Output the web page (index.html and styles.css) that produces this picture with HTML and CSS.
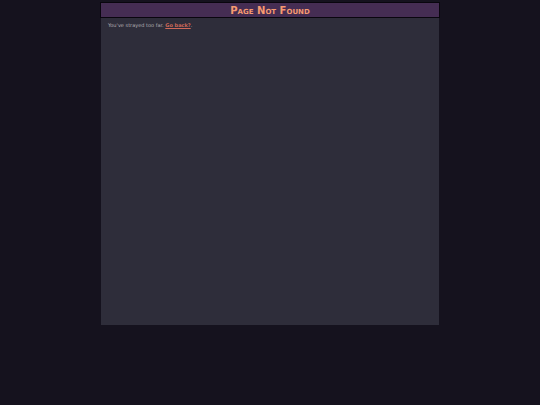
FILE: index.html
```html
<!DOCTYPE html>
<html lang="en">
<head>
<meta charset="utf-8">
<title>Page Not Found</title>
<link rel="stylesheet" href="styles.css">
</head>
<body>
<div class="page">
  <header class="banner"><h1 class="title">Page Not Found</h1></header>
  <main class="content">
    <p class="message">You've strayed too far. <a class="link" href="/">Go back?</a>.</p>
  </main>
</div>
</body>
</html>
```

FILE: styles.css
```css
* {
  box-sizing: border-box;
}

body {
  margin: 0;
  background: #15121e;
  color: #b3aeb3;
  font-family: "DejaVu Sans", Verdana, sans-serif;
  font-size: 5px;
  line-height: 8px;
}

.page {
  display: flex;
  flex-direction: column;
  width: 63%;
  min-height: 80vh;
  margin: 1px auto 0;
  padding-top: 1px;
}

.banner {
  padding-top: 1px;
  border: 1px solid #09060e;
  background: #452d53;
}

.title {
  margin: 0;
  color: #f69a70;
  font-size: 10px;
  font-variant: small-caps;
  line-height: 13px;
  text-align: center;
}

.content {
  flex: 1;
  margin: 0 1px;
  padding: 3px 7px;
  background: #2e2d3a;
}

.message {
  margin: 0;
}

.link {
  color: #cf6859;
  font-weight: bold;
}
```
